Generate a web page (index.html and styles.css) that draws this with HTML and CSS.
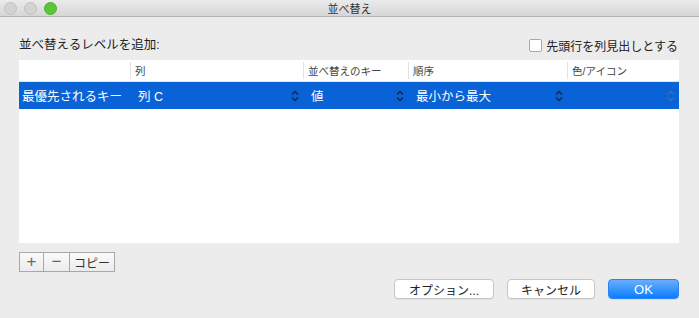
FILE: index.html
```html
<!DOCTYPE html>
<html lang="ja">
<head>
    <meta charset="UTF-8">
    <title>並べ替え</title>
    <link rel="stylesheet" href="styles.css">
</head>
<body>
    <div class="window">
        <div class="titlebar">
            <div class="lights">
                <span class="light"></span>
                <span class="light"></span>
                <span class="light green"></span>
            </div>
            <div class="title">並べ替え</div>
            <div></div>
        </div>

        <div class="content">
            <div class="top-row">
                <span class="add-label">並べ替えるレベルを追加:</span>
                <label class="check"><span class="box"></span>先頭行を列見出しとする</label>
            </div>

            <div class="table">
                <div class="row head">
                    <div class="cell"></div>
                    <div class="cell">列</div>
                    <div class="cell">並べ替えのキー</div>
                    <div class="cell">順序</div>
                    <div class="cell">色/アイコン</div>
                </div>
                <div class="row selected">
                    <div class="cell">最優先されるキー</div>
                    <div class="cell"><span>列 C</span><svg class="updown" viewBox="0 0 8 12"><path d="M1 4.5 L4 1.5 L7 4.5 M1 7.5 L4 10.5 L7 7.5"/></svg></div>
                    <div class="cell"><span>値</span><svg class="updown" viewBox="0 0 8 12"><path d="M1 4.5 L4 1.5 L7 4.5 M1 7.5 L4 10.5 L7 7.5"/></svg></div>
                    <div class="cell"><span>最小から最大</span><svg class="updown" viewBox="0 0 8 12"><path d="M1 4.5 L4 1.5 L7 4.5 M1 7.5 L4 10.5 L7 7.5"/></svg></div>
                    <div class="cell"><span></span><svg class="updown faded" viewBox="0 0 8 12"><path d="M1 4.5 L4 1.5 L7 4.5 M1 7.5 L4 10.5 L7 7.5"/></svg></div>
                </div>
            </div>

            <div class="seg">
                <button class="seg-btn sym">+</button>
                <button class="seg-btn sym">−</button>
                <button class="seg-btn">コピー</button>
            </div>

            <div class="actions">
                <button class="btn options">オプション...</button>
                <button class="btn cancel">キャンセル</button>
                <button class="btn ok">OK</button>
            </div>
        </div>
    </div>
</body>
</html>
```

FILE: styles.css
```css
body { margin: 0; background: #ececec; font-family: "Liberation Sans", "Noto Sans CJK JP", sans-serif; color: #222; }
.window { width: 699px; height: 318px; background: #ececec; }

.titlebar { height: 16px; display: grid; grid-template-columns: 1fr auto 1fr; align-items: center; background: linear-gradient(#ebebeb, #d6d6d6); border-bottom: 1px solid #b3b3b3; }
.lights { display: flex; gap: 7px; padding-left: 4px; }
.light { width: 11px; height: 11px; border-radius: 50%; background: #d3d3d3; border: 1px solid #c2c2c2; }
.light.green { background: #5cc63b; border-color: #4fae30; }
.title { font-size: 11px; color: #333; }

.content { padding: 0 20px 0 19px; }
.top-row { height: 43px; display: flex; align-items: flex-end; justify-content: space-between; box-sizing: border-box; }
.add-label { font-size: 12.5px; padding-bottom: 7px; }
.check { display: flex; align-items: center; gap: 4px; font-size: 12px; padding-bottom: 6px; margin-right: 1px; }
.box { width: 11px; height: 11px; border: 1px solid #a9a9a9; border-radius: 2px; background: #fff; }

.table { height: 183px; background: #fff; }
.row { display: grid; grid-template-columns: 111px 173px 105px 159px 112px; }
.row.head { height: 21px; border-bottom: 1px solid #e6e6e6; }
.row.head .cell { font-size: 10.5px; color: #444; border-left: 1px solid #e3e3e3; padding-left: 4px; display: flex; align-items: center; margin: 2px 0; }
.row.head .cell:first-child { border-left: none; }
.row.selected { height: 27px; background: #0a63d6; color: #fff; }
.row.selected .cell { display: flex; align-items: center; justify-content: space-between; font-size: 12.5px; padding: 0 4px 0 8px; }
.row.selected .cell:first-child { padding-left: 3px; }
.updown { width: 8px; height: 12px; fill: none; stroke: #10254a; stroke-width: 1.4; }
.updown.faded { stroke: #3b6fb5; }

.seg { display: flex; margin-top: 9px; }
.seg-btn { height: 20px; border: 1px solid #a8a8a8; border-left: none; background: linear-gradient(#fafafa, #ececec); font-family: inherit; font-size: 12px; color: #333; padding: 0 4px; }
.seg-btn:first-child { border-left: 1px solid #a8a8a8; }
.seg-btn.sym { width: 25px; font-size: 17px; color: #666; line-height: 16px; padding: 0; }
.seg-btn.sym + .sym { width: 26px; }

.actions { display: flex; justify-content: flex-end; gap: 13px; margin-top: 7px; }
.btn { height: 20px; border-radius: 4px; border: 1px solid #c6c6c6; background: #fff; font-family: inherit; font-size: 12px; color: #222; box-shadow: 0 1px 0 rgba(0,0,0,0.06); }
.btn.options { width: 100px; }
.btn.cancel { width: 88px; }
.btn.ok { width: 71px; border: 1px solid #2a82f5; background: linear-gradient(#68affc, #0d7dff); color: #fff; font-size: 13px; }
```
